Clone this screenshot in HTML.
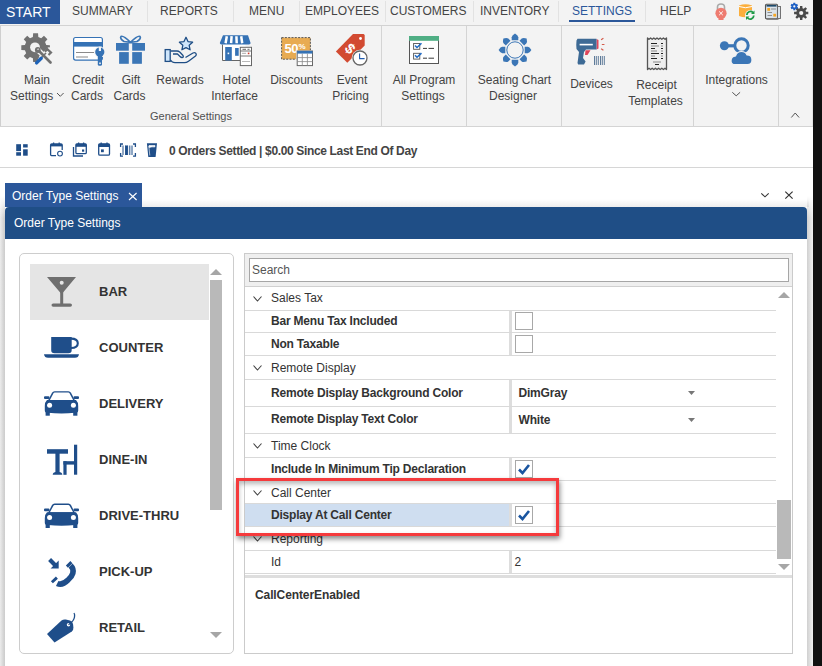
<!DOCTYPE html>
<html><head><meta charset="utf-8">
<style>
*{box-sizing:border-box;margin:0;padding:0}
html,body{width:822px;height:666px;overflow:hidden;background:#fff}
body{position:relative;font-family:"Liberation Sans",sans-serif;color:#444}
.a{position:absolute}
.t{position:absolute;white-space:nowrap;font-size:12px;line-height:12px}
.c{transform:translateX(-50%)}
.sep{position:absolute;width:1px;background:#d4d4d4}
.tsep{position:absolute;width:1px;background:#e2e2e2;top:1px;height:21px}
.b{font-weight:bold}
svg{position:absolute;overflow:visible}
</style></head><body>

<!-- tab bar -->
<div class="a" style="left:0;top:0;width:813px;height:25px;background:#f3f3f3"></div>
<div class="a" style="left:0;top:25px;width:813px;height:1px;background:#d2d2d2"></div>
<div class="a" style="left:0;top:0;width:60px;height:24px;background:#2b579a"></div>
<div class="t" style="left:6px;top:5px;font-size:14px;line-height:14px;color:#fff">START</div>
<div class="t" style="left:72px;top:5px;color:#444">SUMMARY</div>
<div class="tsep" style="left:147px"></div>
<div class="t" style="left:160px;top:5px">REPORTS</div>
<div class="tsep" style="left:233px"></div>
<div class="t" style="left:249px;top:5px">MENU</div>
<div class="tsep" style="left:299px"></div>
<div class="t" style="left:305px;top:5px">EMPLOYEES</div>
<div class="tsep" style="left:385px"></div>
<div class="t" style="left:390px;top:5px">CUSTOMERS</div>
<div class="tsep" style="left:473px"></div>
<div class="t" style="left:480px;top:5px">INVENTORY</div>
<div class="tsep" style="left:558px"></div>
<div class="t" style="left:572px;top:5px;color:#2b579a">SETTINGS</div>
<div class="a" style="left:569px;top:20px;width:66px;height:2px;background:#2b579a"></div>
<div class="tsep" style="left:645px"></div>
<div class="t" style="left:660px;top:5px">HELP</div>

<!-- ribbon -->
<div class="a" style="left:0;top:26px;width:813px;height:100px;background:#f3f3f3;border-left:1px solid #cfcfcf"></div>
<div class="a" style="left:0;top:126px;width:813px;height:1px;background:#d4d4d4"></div>
<div class="sep" style="left:381px;top:26px;height:100px"></div>
<div class="sep" style="left:466px;top:26px;height:100px"></div>
<div class="sep" style="left:561px;top:26px;height:100px"></div>
<div class="sep" style="left:693px;top:26px;height:100px"></div>
<div class="sep" style="left:778px;top:26px;height:100px"></div>
<div class="a" style="left:812px;top:26px;width:1px;height:100px;background:#e4e4e4"></div>

<div class="t c" style="left:37px;top:73.5px">Main</div>
<div class="t" style="left:10px;top:89.5px">Settings</div>
<div class="t c" style="left:88px;top:73.5px">Credit</div>
<div class="t c" style="left:87px;top:89.5px">Cards</div>
<div class="t c" style="left:131px;top:73.5px">Gift</div>
<div class="t c" style="left:129.5px;top:89.5px">Cards</div>
<div class="t c" style="left:180px;top:73.5px">Rewards</div>
<div class="t c" style="left:236.5px;top:73.5px">Hotel</div>
<div class="t c" style="left:234.5px;top:89.5px">Interface</div>
<div class="t c" style="left:296.5px;top:73.5px">Discounts</div>
<div class="t c" style="left:352px;top:73.5px">Event</div>
<div class="t c" style="left:350.5px;top:89.5px">Pricing</div>
<div class="t c" style="left:191px;top:111px;font-size:11px;line-height:11px;color:#505050">General Settings</div>
<div class="t c" style="left:424px;top:73.5px">All Program</div>
<div class="t c" style="left:423px;top:89.5px">Settings</div>
<div class="t c" style="left:514.5px;top:73.5px">Seating Chart</div>
<div class="t c" style="left:513px;top:89.5px">Designer</div>
<div class="t c" style="left:591.5px;top:77.5px">Devices</div>
<div class="t c" style="left:656.5px;top:78.5px">Receipt</div>
<div class="t c" style="left:655.5px;top:94.5px">Templates</div>
<div class="t c" style="left:736.5px;top:73.5px">Integrations</div>

<!-- toolbar -->
<div class="a" style="left:0;top:167px;width:813px;height:1px;background:#d6d6d6"></div>
<div class="t b" style="left:169px;top:145px;letter-spacing:-0.35px;color:#444">0 Orders Settled | $0.00 Since Last End Of Day</div>

<!-- doc tab -->
<div class="a" style="left:5px;top:183px;width:137px;height:24px;background:#2b579a"></div>
<div class="t" style="left:12px;top:190px;color:#fff">Order Type Settings</div>

<!-- dialog -->
<div class="a" style="left:0;top:196px;width:5px;height:470px;background:linear-gradient(to bottom,#fff 0,rgba(255,255,255,0) 22px),linear-gradient(to right,#ececec,#d4d4d4 70%,#cccccc)"></div>
<div class="a" style="left:807px;top:196px;width:6px;height:470px;background:linear-gradient(to bottom,#fff 0,rgba(255,255,255,0) 22px),linear-gradient(to right,#d0d0d0,#f0f0f0)"></div>
<div class="a" style="left:142px;top:199px;width:667px;height:8px;background:linear-gradient(to bottom,rgba(0,0,0,0),rgba(0,0,0,0.07))"></div>
<div class="a" style="left:5px;top:207px;width:802px;height:32px;background:#1f4e86;border-radius:4px 4px 0 0"></div>
<div class="t" style="left:14px;top:217px;color:#fff">Order Type Settings</div>

<!-- left list panel -->
<div class="a" style="left:19px;top:253px;width:215px;height:401px;border:1px solid #cdcdcd;border-radius:5px"></div>
<div class="a" style="left:30px;top:264px;width:179px;height:56px;background:#e5e5e5"></div>
<div class="t b" style="left:99px;top:285px;font-size:13px;line-height:13px;color:#333">BAR</div>
<div class="t b" style="left:99px;top:341px;font-size:13px;line-height:13px;color:#333">COUNTER</div>
<div class="t b" style="left:99px;top:397px;font-size:13px;line-height:13px;color:#333">DELIVERY</div>
<div class="t b" style="left:99px;top:453px;font-size:13px;line-height:13px;color:#333">DINE-IN</div>
<div class="t b" style="left:99px;top:509px;font-size:13px;line-height:13px;color:#333">DRIVE-THRU</div>
<div class="t b" style="left:99px;top:565px;font-size:13px;line-height:13px;color:#333">PICK-UP</div>
<div class="t b" style="left:99px;top:621px;font-size:13px;line-height:13px;color:#333">RETAIL</div>
<div class="a" style="left:210px;top:280px;width:12px;height:230px;background:#b9b9b9"></div>
<svg style="left:210px;top:269px" width="12" height="6"><path d="M0 6 L6 0 L12 6Z" fill="#a6a6a6"/></svg>
<svg style="left:210px;top:632px" width="12" height="6"><path d="M0 0 L12 0 L6 6Z" fill="#a6a6a6"/></svg>

<!-- property grid -->
<!--GRID-->
<div class="a" style="left:244px;top:253px;width:549px;height:401px;border:1px solid #cbcbcb;background:#fff"></div>
<div class="a" style="left:245px;top:254px;width:547px;height:32px;background:#efefef"></div>
<div class="a" style="left:245px;top:286px;width:547px;height:1px;background:#d0d0d0"></div>
<div class="a" style="left:249px;top:258px;width:540px;height:24px;background:#fff;border:1px solid #a6a6a6"></div>
<div class="t" style="left:252px;top:264px;color:#555">Search</div>
<div class="a" style="left:245px;top:310px;width:531px;height:1px;background:#d9d9d9"></div>
<svg style="left:253px;top:296.0px" width="9" height="5"><path d="M0.5 0.5 L4.5 5 L8.5 0.5" fill="none" stroke="#444" stroke-width="1.1"/></svg>
<div class="t" style="left:271px;top:291.6px;color:#333">Sales Tax</div>
<div class="a" style="left:245px;top:332px;width:531px;height:1px;background:#d9d9d9"></div>
<div class="a" style="left:509px;top:311px;width:3px;height:21px;background:#dddddd"></div>
<div class="t" style="left:271px;top:315.1px;color:#333;font-weight:bold;letter-spacing:-0.2px;">Bar Menu Tax Included</div>
<div class="a" style="left:515px;top:312px;width:18px;height:18px;border:1px solid #a8a8a8;background:#fff"></div>
<div class="a" style="left:245px;top:355px;width:531px;height:1px;background:#d9d9d9"></div>
<div class="a" style="left:509px;top:333px;width:3px;height:22px;background:#dddddd"></div>
<div class="t" style="left:271px;top:337.8px;color:#333;font-weight:bold;letter-spacing:-0.2px;">Non Taxable</div>
<div class="a" style="left:515px;top:335px;width:18px;height:18px;border:1px solid #a8a8a8;background:#fff"></div>
<div class="a" style="left:245px;top:379px;width:531px;height:1px;background:#d9d9d9"></div>
<svg style="left:253px;top:365.0px" width="9" height="5"><path d="M0.5 0.5 L4.5 5 L8.5 0.5" fill="none" stroke="#444" stroke-width="1.1"/></svg>
<div class="t" style="left:271px;top:362.1px;color:#333">Remote Display</div>
<div class="a" style="left:245px;top:406px;width:531px;height:1px;background:#d9d9d9"></div>
<div class="a" style="left:509px;top:380px;width:3px;height:26px;background:#dddddd"></div>
<div class="t" style="left:271px;top:386.8px;color:#333;font-weight:bold;letter-spacing:-0.2px;">Remote Display Background Color</div>
<div class="t" style="left:518.5px;top:386.8px;color:#333;font-weight:bold;letter-spacing:-0.2px;">DimGray</div>
<svg style="left:688px;top:391.0px" width="7" height="4"><path d="M0 0 L7 0 L3.5 4Z" fill="#777"/></svg>
<div class="a" style="left:245px;top:433px;width:531px;height:1px;background:#d9d9d9"></div>
<div class="a" style="left:509px;top:407px;width:3px;height:26px;background:#dddddd"></div>
<div class="t" style="left:271px;top:413.1px;color:#333;font-weight:bold;letter-spacing:-0.2px;">Remote Display Text Color</div>
<div class="t" style="left:518.5px;top:413.6px;color:#333;font-weight:bold;letter-spacing:-0.2px;">White</div>
<svg style="left:688px;top:418.0px" width="7" height="4"><path d="M0 0 L7 0 L3.5 4Z" fill="#777"/></svg>
<div class="a" style="left:245px;top:457px;width:531px;height:1px;background:#d9d9d9"></div>
<svg style="left:253px;top:443.0px" width="9" height="5"><path d="M0.5 0.5 L4.5 5 L8.5 0.5" fill="none" stroke="#444" stroke-width="1.1"/></svg>
<div class="t" style="left:271px;top:439.6px;color:#333">Time Clock</div>
<div class="a" style="left:245px;top:480px;width:531px;height:1px;background:#d9d9d9"></div>
<div class="a" style="left:509px;top:458px;width:3px;height:22px;background:#dddddd"></div>
<div class="t" style="left:271px;top:462.8px;color:#333;font-weight:bold;letter-spacing:-0.2px;">Include In Minimum Tip Declaration</div>
<div class="a" style="left:515px;top:460px;width:18px;height:18px;border:1px solid #a8a8a8;background:#fff"></div>
<svg style="left:515px;top:460px" width="18" height="18"><path d="M4 9.5 L7.5 13 L14 5" fill="none" stroke="#1a55a0" stroke-width="2.6"/></svg>
<div class="a" style="left:245px;top:503px;width:531px;height:1px;background:#d9d9d9"></div>
<svg style="left:253px;top:489.5px" width="9" height="5"><path d="M0.5 0.5 L4.5 5 L8.5 0.5" fill="none" stroke="#444" stroke-width="1.1"/></svg>
<div class="t" style="left:271px;top:486.6px;color:#333">Call Center</div>
<div class="a" style="left:245px;top:526px;width:531px;height:1px;background:#d9d9d9"></div>
<div class="a" style="left:245px;top:504px;width:264px;height:22px;background:#cfdef0"></div>
<div class="a" style="left:509px;top:504px;width:3px;height:22px;background:#dddddd"></div>
<div class="t" style="left:271px;top:508.8px;color:#333;font-weight:bold;letter-spacing:-0.2px;">Display At Call Center</div>
<div class="a" style="left:515px;top:506px;width:18px;height:18px;border:1px solid #a8a8a8;background:#fff"></div>
<svg style="left:515px;top:506px" width="18" height="18"><path d="M4 9.5 L7.5 13 L14 5" fill="none" stroke="#1a55a0" stroke-width="2.6"/></svg>
<div class="a" style="left:245px;top:550px;width:531px;height:1px;background:#d9d9d9"></div>
<svg style="left:253px;top:536.0px" width="9" height="5"><path d="M0.5 0.5 L4.5 5 L8.5 0.5" fill="none" stroke="#444" stroke-width="1.1"/></svg>
<div class="t" style="left:271px;top:533.1px;color:#333">Reporting</div>
<div class="a" style="left:245px;top:573px;width:531px;height:1px;background:#d9d9d9"></div>
<div class="a" style="left:509px;top:551px;width:3px;height:22px;background:#dddddd"></div>
<div class="t" style="left:271px;top:555.6px;color:#333;font-weight:normal;">Id</div>
<div class="t" style="left:514.5px;top:555.6px;color:#333;font-weight:normal;">2</div>
<svg style="left:778px;top:292px" width="12" height="6"><path d="M0 6 L6 0 L12 6Z" fill="#a6a6a6"/></svg>
<div class="a" style="left:777px;top:500px;width:14px;height:59px;background:#b9b9b9"></div>
<svg style="left:778px;top:564px" width="12" height="6"><path d="M0 0 L12 0 L6 6Z" fill="#a6a6a6"/></svg>
<div class="a" style="left:245px;top:575px;width:547px;height:3px;background:#dedede"></div>
<div class="t b" style="left:255px;top:588.8px;color:#333;letter-spacing:-0.1px">CallCenterEnabled</div>
<!--/GRID-->

<div class="a" style="left:813px;top:0;width:9px;height:666px;background:#111"></div>
<!--ICONS-->
<svg style="left:0;top:0" width="822" height="666" viewBox="0 0 822 666">
<!-- ===== tab bar right icons ===== -->
<path d="M717.5 10 V7 Q717.5 4 721 4 Q724.5 4 724.5 7 V10" fill="none" stroke="#a9a9a9" stroke-width="1.6"/>
<circle cx="721" cy="13.3" r="5.6" fill="#ee7b70"/>
<rect x="718.5" y="18" width="5" height="2" fill="#ee7b70"/>
<path d="M719.2 11.5 L722.8 15.1 M722.8 11.5 L719.2 15.1" stroke="#fff" stroke-width="1"/>
<path d="M739 5.5 Q745.5 3 752 5.5 V16 Q745.5 18.5 739 16Z" fill="#fbae3c"/>
<path d="M739 6.5 Q745.5 9 752 6.5" fill="none" stroke="#fff" stroke-width="1"/>
<circle cx="750.3" cy="15.3" r="5.3" fill="#f3f3f3"/>
<path d="M746.8 15 A3.6 3.6 0 0 1 753 12.6" fill="none" stroke="#1e9a48" stroke-width="1.8"/>
<path d="M753.8 15.6 A3.6 3.6 0 0 1 747.6 18" fill="none" stroke="#1e9a48" stroke-width="1.8"/>
<path d="M754.5 10.5 V14 H751Z" fill="#1e9a48"/>
<path d="M746 20 V16.6 H749.5Z" fill="#1e9a48"/>
<rect x="765.5" y="4.3" width="12" height="14.5" rx="1" fill="#dbe3ea" stroke="#555" stroke-width="1.1"/>
<rect x="777.5" y="6.5" width="3" height="12" fill="#dbe3ea" stroke="#666" stroke-width="0.9"/>
<rect x="766.5" y="5" width="10" height="1.6" fill="#1d4a6a"/>
<rect x="767.3" y="8" width="2.8" height="2.8" fill="#f5a623"/>
<rect x="773.3" y="13.8" width="2.8" height="2.8" fill="#f5a623"/>
<path d="M771 9 H776 M767.5 12.5 H772 M767.5 15.5 H772" stroke="#777" stroke-width="0.8"/>
<rect x="766.5" y="18.6" width="12" height="1.2" fill="#777"/>
<path d="M799.91 8.17 L800.05 5.89 L802.35 5.89 L802.49 8.17 L803.71 8.67 L805.42 7.16 L807.04 8.78 L805.53 10.49 L806.03 11.71 L808.31 11.85 L808.31 14.15 L806.03 14.29 L805.53 15.51 L807.04 17.22 L805.42 18.84 L803.71 17.33 L802.49 17.83 L802.35 20.11 L800.05 20.11 L799.91 17.83 L798.69 17.33 L796.98 18.84 L795.36 17.22 L796.87 15.51 L796.37 14.29 L794.09 14.15 L794.09 11.85 L796.37 11.71 L796.87 10.49 L795.36 8.78 L796.98 7.16 L798.69 8.67Z" fill="#4a4a4a"/>
<circle cx="801.2" cy="13" r="2.1" fill="#f3f3f3"/>
<path d="M793.28 3.69 L793.30 2.63 L795.30 2.63 L795.32 3.69 L796.14 4.16 L797.06 3.65 L798.07 5.38 L797.16 5.93 L797.16 6.87 L798.07 7.42 L797.06 9.15 L796.14 8.64 L795.32 9.11 L795.30 10.17 L793.30 10.17 L793.28 9.11 L792.46 8.64 L791.54 9.15 L790.53 7.42 L791.44 6.87 L791.44 5.93 L790.53 5.38 L791.54 3.65 L792.46 4.16Z" fill="#1d5fc4"/>
<circle cx="794.3" cy="6.4" r="1.1" fill="#f3f3f3"/>

<!-- ===== ribbon icons ===== -->
<!-- main settings gear -->
<path d="M32.88 36.94 L33.15 33.31 L38.05 33.31 L38.32 36.94 L41.21 38.14 L43.97 35.76 L47.44 39.23 L45.06 41.99 L46.26 44.88 L49.89 45.15 L49.89 50.05 L46.26 50.32 L45.06 53.21 L47.44 55.97 L43.97 59.44 L41.21 57.06 L38.32 58.26 L38.05 61.89 L33.15 61.89 L32.88 58.26 L29.99 57.06 L27.23 59.44 L23.76 55.97 L26.14 53.21 L24.94 50.32 L21.31 50.05 L21.31 45.15 L24.94 44.88 L26.14 41.99 L23.76 39.23 L27.23 35.76 L29.99 38.14Z" fill="#717171"/>
<circle cx="35" cy="47.3" r="4.9" fill="#f3f3f3"/>
<path d="M38 50 L50.8 62.8" stroke="#f3f3f3" stroke-width="5.4" stroke-linecap="round"/>
<path d="M42 57.5 L49 50.5" stroke="#f3f3f3" stroke-width="6" stroke-linecap="round"/>
<path d="M38.5 50.5 L50.5 62.5" stroke="#717171" stroke-width="2.7" stroke-linecap="round"/>
<circle cx="37.8" cy="50" r="2.9" fill="#717171"/>
<path d="M36.8 49.6 L38.2 48.2 L39 49.8 Z" fill="#f3f3f3"/>
<path d="M44 50.8 L47.2 47.6 L52.6 52.6 L49.2 55.8 L47.8 54.3 L49.4 52.6 L47.3 50.8 L45.6 52.4Z" fill="#717171"/>
<path d="M41.5 57.5 L46 53" stroke="#717171" stroke-width="1.6"/>
<path d="M36.6 62.9 L41.2 58.3" stroke="#1e63b8" stroke-width="3.4" stroke-linecap="round"/>
<!-- credit card -->
<rect x="73.6" y="37.5" width="28.8" height="22.6" rx="2" fill="#fff" stroke="#3572b5" stroke-width="1.2"/>
<rect x="73.6" y="42" width="28.8" height="4.6" fill="#3572b5"/>
<path d="M76 52.5 H94 M76 57 H88" stroke="#8a8a8a" stroke-width="1.1"/>
<circle cx="99.8" cy="52" r="5.6" fill="#f3f3f3"/>
<circle cx="99.8" cy="52" r="4.6" fill="#3572b5"/>
<rect x="98.8" y="47" width="2.2" height="4" fill="#f3f3f3"/>
<rect x="97.8" y="54" width="4.2" height="11.8" rx="1.6" fill="#3572b5"/>
<rect x="99.2" y="62.5" width="1.6" height="1.6" fill="#f3f3f3"/>
<!-- gift -->
<rect x="116" y="43" width="29" height="7.7" fill="#3b76b6"/>
<rect x="119.1" y="52.1" width="22.8" height="11.7" fill="#3b76b6"/>
<rect x="128.8" y="42" width="3.4" height="23" fill="#f3f3f3"/>
<path d="M130.5 42.3 Q123 35 121 36.5 Q119.5 38.5 124 41.5 Z M130.5 42.3 Q138 35 140 36.5 Q141.5 38.5 137 41.5 Z" fill="none" stroke="#3b76b6" stroke-width="1.7"/>
<!-- rewards -->
<path d="M186 37.3 L188 41.6 L192.6 42.2 L189.2 45.3 L190.1 49.8 L186 47.6 L181.9 49.8 L182.8 45.3 L179.4 42.2 L184 41.6Z" fill="#cfe6fb" stroke="#1f4e85" stroke-width="1.3" stroke-linejoin="round"/>
<rect x="165.2" y="49.6" width="5" height="11.8" fill="#cfe6fb" stroke="#1f4e85" stroke-width="1.3"/>
<path d="M170.5 51 H177 Q178.5 51 180 52.3 L183 55.5 Q184 57.3 182 57.5 Q181 57.5 180 56.5 L177.5 54 H173" fill="none" stroke="#1f4e85" stroke-width="1.3" stroke-linejoin="round"/>
<path d="M170.5 60 Q172 62.7 175 62.7 H184.5 Q186.5 62.7 188.5 61.2 L195.5 56 Q197 54.3 195.5 53 Q194.5 52.3 193 53 L185.5 57.5" fill="none" stroke="#1f4e85" stroke-width="1.3" stroke-linejoin="round"/>
<!-- hotel -->
<rect x="222.5" y="44" width="23" height="16.5" fill="#fff"/>
<path d="M222.5 44.5 V60.5 H240" fill="none" stroke="#666" stroke-width="1"/>
<rect x="225.2" y="47" width="6.6" height="13.5" fill="#3572b5"/>
<rect x="227.6" y="52.6" width="1.6" height="1.6" fill="#fff"/>
<rect x="235.1" y="48" width="3.6" height="7.8" fill="#3572b5"/>
<path d="M223 35.2 H248 L250.6 43 Q250.6 44.4 249 44.4 H221.5 Q219.8 44.4 219.8 43Z" fill="#3572b5"/>
<path d="M226.8 36.2 L225.6 43.2 M231.6 36.2 L231.1 43.2 M236.4 36.2 L236.7 43.2 M241.2 36.2 L242.2 43.2" stroke="#fff" stroke-width="2.5"/>
<rect x="240.3" y="47.3" width="11.2" height="18.3" fill="#fff" stroke="#666" stroke-width="1"/>
<path d="M240.3 51 H251.5 M240.3 56 H251.5" stroke="#666" stroke-width="0.9"/>
<path d="M242.5 49.3 H246 M247.5 49.3 H249.5" stroke="#555" stroke-width="0.9"/>
<path d="M242 54 L243 52.8 L244 54 L245 52.8 L246 54" fill="none" stroke="#888" stroke-width="0.6"/>
<rect x="247.8" y="52.6" width="1.6" height="1.6" fill="#d03a2a"/>
<path d="M242 62 L243 61 L244 62 L245 61 L246 62 L247 61 L248 62 L249 61 L250 62" fill="none" stroke="#888" stroke-width="0.6"/>
<!-- discounts -->
<rect x="281.6" y="37.6" width="28.8" height="21.6" fill="#e8ab52" stroke="#5a5a5a" stroke-width="1" stroke-dasharray="2 1.3"/>
<text x="284.5" y="53.2" font-family="Liberation Sans" font-weight="bold" font-size="13" fill="#fff" letter-spacing="-0.6">50</text>
<text x="298.6" y="48.5" font-family="Liberation Sans" font-weight="bold" font-size="8" fill="#fff">%</text>
<rect x="296.2" y="50.3" width="17" height="16" fill="#f3f3f3"/>
<rect x="297.2" y="51" width="15.3" height="14.6" fill="#fff" stroke="#666" stroke-width="1"/>
<rect x="297.2" y="51" width="15.3" height="2.6" fill="#3572b5"/>
<path d="M302.3 53.6 V65.6 M307.4 53.6 V65.6 M297.2 57.6 H312.5 M297.2 61.6 H312.5" stroke="#888" stroke-width="0.8"/>
<!-- event pricing -->
<path d="M353 34 L363.6 34 L364.7 35.1 V45.6 L347.3 62.7 L335.9 51.5Z" fill="#d24a31"/>
<circle cx="360.5" cy="38.5" r="1.4" fill="#fff"/>
<g transform="rotate(45 350 48.5)"><text x="346" y="53.5" font-family="Liberation Sans" font-weight="bold" font-size="14.5" fill="#fff">$</text></g>
<circle cx="360" cy="58" r="8.3" fill="#f3f3f3"/>
<circle cx="360" cy="58" r="7" fill="#fff" stroke="#666" stroke-width="1.3"/>
<path d="M359.6 53.5 V58.6 H364.6" fill="none" stroke="#1f5bb0" stroke-width="1.1"/>
<!-- all program settings -->
<rect x="409.5" y="36.5" width="29" height="27" fill="#fff" stroke="#555" stroke-width="1"/>
<rect x="409" y="36" width="30" height="4.8" fill="#4fae84"/>
<rect x="413.6" y="43.5" width="6.2" height="5.8" fill="none" stroke="#555" stroke-width="0.9"/>
<rect x="413.6" y="53.3" width="6.2" height="5.8" fill="none" stroke="#555" stroke-width="0.9"/>
<path d="M415 45.5 L417 47.5 L421.5 43.3 M415 55.3 L417 57.3 L421.5 53.1" fill="none" stroke="#1f6ac4" stroke-width="1.5"/>
<path d="M423 48.4 H427 M428.5 48.4 H434 M423 58.2 H427 M428.5 58.2 H434" stroke="#222" stroke-width="0.9"/>
<!-- seating chart -->
<circle cx="515" cy="50" r="8.2" fill="none" stroke="#3b76b6" stroke-width="1"/>
<g fill="#3b76b6">
<path id="petal" d="M511.7 40.3 V37.2 Q511.7 35.6 515 33.6 Q518.3 35.6 518.3 37.2 V40.3Z"/>
<use href="#petal" transform="rotate(45 515 50)"/>
<use href="#petal" transform="rotate(90 515 50)"/>
<use href="#petal" transform="rotate(135 515 50)"/>
<use href="#petal" transform="rotate(180 515 50)"/>
<use href="#petal" transform="rotate(225 515 50)"/>
<use href="#petal" transform="rotate(270 515 50)"/>
<use href="#petal" transform="rotate(315 515 50)"/>
</g>
<!-- devices -->
<path d="M596.5 39 L598.5 40 V48.5 L596.5 49.5Z" fill="#e0455a"/>
<path d="M577.5 38.8 H596.5 V49.4 H586 L584 52 L583 58 L585.6 61.5 L584 64.5 H578.2 L577.5 63 L579 52 L576.5 49 Q576 45 576.5 40.5Z" fill="#3d6a95"/>
<path d="M585.5 50.3 H590.5 L587.5 55 H585Z" fill="#e0455a"/>
<rect x="579.6" y="43.8" width="13.2" height="1.6" fill="#fff"/>
<path d="M601.5 39.5 L603 38.5 M602.3 44.5 H604 M601.5 49 L603 50" stroke="#d45a4a" stroke-width="1.2" stroke-linecap="round"/>
<path d="M594.5 56 V65 M596.3 56 V65 M598.3 56 V65 M600.5 56 V65 M602.3 56 V65 M604.3 56 V65" stroke="#5e7b99" stroke-width="1"/>
<!-- receipt -->
<path d="M647.5 38 L649 39.3 L650.6 38 L652.2 39.3 L653.8 38 L655.4 39.3 L657 38 L658.6 39.3 L660.2 38 L661.8 39.3 L663.4 38 L665 39.3 L666.5 38 V69.5 L665 68.2 L663.4 69.5 L661.8 68.2 L660.2 69.5 L658.6 68.2 L657 69.5 L655.4 68.2 L653.8 69.5 L652.2 68.2 L650.6 69.5 L649 68.2 L647.5 69.5Z" fill="#eeeeee" stroke="#555" stroke-width="1.3" stroke-linejoin="round"/>
<path d="M651 43.5 H657 M651 48.5 H655 M651 53.5 H659 M651 58.5 H657 M661 43.5 H663 M661 48.5 H663 M661 53.5 H663 M661 58.5 H663 M655 64.5 H659" stroke="#222" stroke-width="1"/>
<path d="M651 46 H659 M651 51 H657 M651 56 H655 M661 46 H663 M661 51 H663 M661 56 H663 M653 62 H661" stroke="#888" stroke-width="1.2"/>
<!-- integrations -->
<circle cx="724.4" cy="45.8" r="4.5" fill="#3b76b6"/>
<rect x="726" y="44.2" width="9" height="3.2" fill="#3b76b6"/>
<circle cx="741.5" cy="45.5" r="6.7" fill="none" stroke="#3b76b6" stroke-width="3"/>
<path d="M731 61 Q731 56.5 735.5 56 Q737 51.5 741.5 51.5 Q745.5 51.5 747 55 Q752 55 752 60 Q752 64.7 747.5 64.7 H735 Q731 64.7 731 61Z" fill="#3b76b6" stroke="#f3f3f3" stroke-width="1.2"/>

<!-- ribbon chevrons -->
<path d="M57 93 L60.3 96.3 L63.6 93" fill="none" stroke="#555" stroke-width="1"/>
<path d="M732.3 92.3 L736.2 95.8 L740.1 92.3" fill="none" stroke="#555" stroke-width="1"/>
<path d="M791.3 117.5 L795.2 113 L799.1 117.5" fill="none" stroke="#555" stroke-width="1"/>

<!-- ===== toolbar icons ===== -->
<g fill="#1f4e89">
<rect x="16.2" y="144.2" width="4.8" height="6.9"/>
<rect x="23.1" y="144.2" width="4.6" height="3.3"/>
<rect x="16.2" y="152.2" width="4.8" height="3.5"/>
<rect x="23.1" y="149.3" width="4.6" height="6.4"/>
</g>
<g fill="none" stroke="#1f4e89" stroke-width="1.3">
<path d="M56 155.6 H51.5 Q50.6 155.6 50.6 154.6 V145.2 Q50.6 144 51.8 144 H61 Q62.2 144 62.2 145.2 V150"/>
<path d="M53.6 142.6 V145 M59.2 142.6 V145"/>
<circle cx="60" cy="153.6" r="2.4" stroke-width="1.1"/>
<rect x="75.9" y="143.8" width="10.4" height="9.8" rx="1.2"/>
<path d="M78.6 142.5 V144.5 M83.6 142.5 V144.5"/>
<path d="M73.5 147 V156 H83"/>
<rect x="98.7" y="143.8" width="10.8" height="11.4" rx="1.2"/>
<path d="M101.2 142.5 V144.5 M107 142.5 V144.5"/>
<path d="M120.6 147 V144 H123 M133 144 H135.4 V147 M120.6 153 V156.2 H123 M133 156.2 H135.4 V153"/>
</g>
<rect x="75.9" y="143.8" width="10.4" height="3" fill="#1f4e89"/>
<rect x="82" y="149.5" width="2.2" height="2.2" fill="#1f4e89"/>
<rect x="98.7" y="143.8" width="10.8" height="3.2" fill="#1f4e89"/>
<rect x="101" y="149.4" width="2.8" height="2.8" fill="#1f4e89"/>
<rect x="50.6" y="144" width="11.6" height="2.4" fill="#1f4e89"/>
<path d="M123 145.5 V155 M125.6 145.5 V155 M127.6 145.5 V155 M129.8 145.5 V155 M132 145.5 V155" stroke="#1f4e89" stroke-width="1"/>
<rect x="125.5" y="145.5" width="2" height="9.5" fill="#1f4e89"/>
<path d="M146.9 143.2 H157 L155.6 156.9 H148.3Z" fill="#1f4e89"/>
<path d="M149 145.5 H155 L154.8 147 Q152 146.5 149.2 147.5Z M148.8 146 L149.8 155.5" fill="#fff" stroke="#fff" stroke-width="0.6"/>

<!-- ===== doc tab / dialog controls ===== -->
<path d="M129 193 L136.6 200 M136.6 193 L129 200" stroke="#fff" stroke-width="1.1"/>
<path d="M761.3 193.4 L765 196.8 L768.7 193.4" fill="none" stroke="#333" stroke-width="1.1"/>
<path d="M785.3 191.6 L792.6 198.6 M792.6 191.6 L785.3 198.6" stroke="#333" stroke-width="1.2"/>

<!-- ===== list icons ===== -->
<g fill="#6f6f6f">
<path d="M47 277 H76 L62.2 293.5 V303.5 H61 V293.5Z"/>
<rect x="60.2" y="291" width="3" height="13"/>
<rect x="51.5" y="303.4" width="20.5" height="3.4" rx="1.7"/>
</g>
<circle cx="61.7" cy="282.7" r="2" fill="#e5e5e5"/>
<g fill="#1f4e8a">
<path d="M51.2 337 H71.7 V350 Q71.7 353.3 68.4 353.3 H54.5 Q51.2 353.3 51.2 350Z"/>
<path d="M71 338.6 Q77.8 338.6 77.8 343.3 Q77.8 348 71 348" fill="none" stroke="#1f4e8a" stroke-width="2.1"/>
<path d="M44 354.2 H79 Q78.5 357.8 75 357.8 H48 Q44.5 357.8 44 354.2Z"/>
</g>
<path d="M48 400.6 L52 392.8 Q52.8 391.3 54.6 391.3 H68.4 Q70.2 391.3 71 392.8 L75 400.6Z" fill="#1f4e8a"/>
<path d="M49.9 399.9 L53.6 393.1 Q53.9 392.6 54.6 392.6 H68.4 Q69.1 392.6 69.4 393.1 L73.1 399.9Z" fill="#fff"/>
<rect x="44" y="396.2" width="5.5" height="2.7" rx="1" fill="#1f4e8a"/>
<rect x="73.5" y="396.2" width="5.5" height="2.7" rx="1" fill="#1f4e8a"/>
<path d="M47 400 H76 Q78.2 402 78.2 406 V410.5 Q78.2 412.8 75.2 412.8 Q61.5 414 47.8 412.8 Q44.8 412.8 44.8 410.5 V406 Q44.8 402 47 400Z" fill="#1f4e8a"/>
<rect x="45.6" y="410" width="4.2" height="5.7" fill="#1f4e8a"/>
<rect x="73.2" y="410" width="4.2" height="5.7" fill="#1f4e8a"/>
<circle cx="49.6" cy="405.2" r="2.5" fill="#fff"/>
<circle cx="73.4" cy="405.2" r="2.5" fill="#fff"/>
<g transform="translate(0,112.3)">
<path d="M48 400.6 L52 392.8 Q52.8 391.3 54.6 391.3 H68.4 Q70.2 391.3 71 392.8 L75 400.6Z" fill="#1f4e8a"/>
<path d="M49.9 399.9 L53.6 393.1 Q53.9 392.6 54.6 392.6 H68.4 Q69.1 392.6 69.4 393.1 L73.1 399.9Z" fill="#fff"/>
<rect x="44" y="396.2" width="5.5" height="2.7" rx="1" fill="#1f4e8a"/>
<rect x="73.5" y="396.2" width="5.5" height="2.7" rx="1" fill="#1f4e8a"/>
<path d="M47 400 H76 Q78.2 402 78.2 406 V410.5 Q78.2 412.8 75.2 412.8 Q61.5 414 47.8 412.8 Q44.8 412.8 44.8 410.5 V406 Q44.8 402 47 400Z" fill="#1f4e8a"/>
<rect x="45.6" y="410" width="4.2" height="5.7" fill="#1f4e8a"/>
<rect x="73.2" y="410" width="4.2" height="5.7" fill="#1f4e8a"/>
<circle cx="49.6" cy="405.2" r="2.5" fill="#fff"/>
<circle cx="73.4" cy="405.2" r="2.5" fill="#fff"/>
</g>
<g fill="#1f4e8a">
<rect x="47" y="449.2" width="21" height="4.5"/>
<rect x="55.4" y="452" width="4.2" height="22"/>
<path d="M52.7 474.8 Q53 472 56 472 H59 Q62 472 62.3 474.8Z"/>
<rect x="74" y="444.7" width="3.2" height="30"/>
<rect x="63.4" y="461.2" width="13.5" height="3.4"/>
<rect x="63.4" y="461.2" width="3.2" height="13.6"/>
</g>
<g fill="#1f4e8a">
<path d="M49.6 559.6 L55.2 565.2" stroke="#1f4e8a" stroke-width="4.2"/>
<path d="M58.7 560.4 V568.5 H50.6Z" fill="#1f4e8a"/>
<path d="M70.6 565.6 C75.5 570.5 72.5 576 68 580 C64.5 583.5 61.5 585.5 57.2 583.4" fill="none" stroke="#1f4e8a" stroke-width="5.6"/>
<path d="M66.9 566.6 L71.4 562.1 M51.9 582.3 L56.9 577.6" stroke="#1f4e8a" stroke-width="2.9"/>
</g>
<g fill="#1f4e8a">
<path d="M47 634 L61.5 620.5 Q63.5 619 65.8 619.5 L70 620.5 Q72.5 621.3 73 624 L73.4 627.5 Q73.6 630 71.8 631.5 L54.5 642.5Z"/>
</g>
<circle cx="68.5" cy="624.8" r="1.7" fill="#fff"/>
<path d="M68.5 624.8 Q74 621 74.5 617 Q75 614.5 74 613" fill="none" stroke="#1f4e8a" stroke-width="1.3"/>
</svg>

<!--/ICONS-->
<!--RED--><div class="a" style="left:236px;top:478px;width:323px;height:58px;border:3.5px solid #f53a3c;box-shadow:1px 3px 5px rgba(0,0,0,0.45), inset 0 3px 5px rgba(0,0,0,0.28)"></div><!--/RED-->
</body></html>
